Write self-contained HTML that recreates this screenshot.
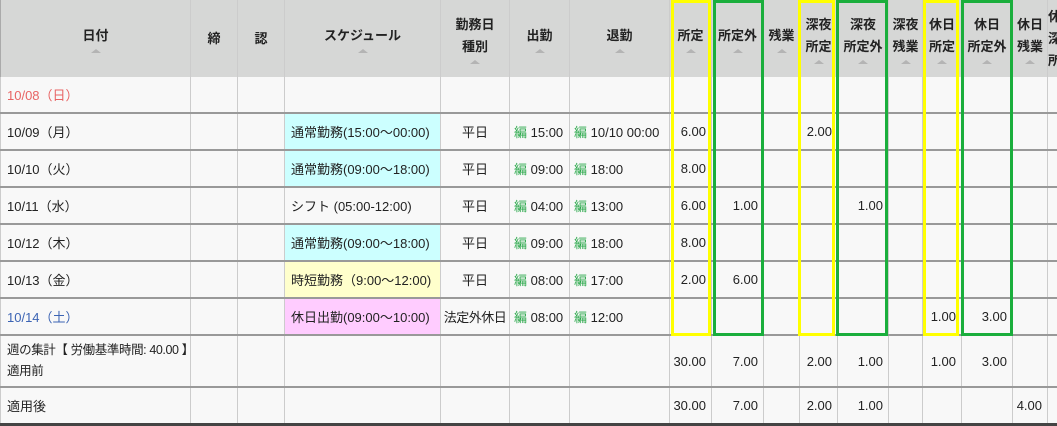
<!DOCTYPE html>
<html><head><meta charset="utf-8"><style>
body{margin:0;width:1057px;height:426px;overflow:hidden;background:#f8f8f8;font-family:"Liberation Sans","Noto Sans CJK JP",sans-serif;font-size:13px;color:#222;position:relative}
table{border-collapse:collapse;table-layout:fixed;position:absolute;left:0;top:0;width:1080px}
td,th{border-left:1px solid #ccc;border-right:1px solid #ccc;padding:0;white-space:nowrap;overflow:hidden}
th{background:#d6d7d6;font-weight:bold;height:77px;border-left:1px solid #aaa;line-height:22px;vertical-align:middle;position:relative}
th .a{display:block;width:0;height:0;margin:0 auto;border-left:5px solid transparent;border-right:5px solid transparent;border-bottom:4px solid #b4b4b4;margin-top:2px}
td{border-top:2px solid #999;height:35px}
.l{padding-left:6px}
.r{text-align:right;padding-right:5px}
.c{text-align:center}
.g{color:#2aa84a}
.cy{background:#ccffff}.yl{background:#ffffcc}.pk{background:#ffccff}
.red{color:#e86464}.blue{color:#3c64b4}
.box{position:absolute;top:0;height:336px;box-sizing:border-box}
.Y{border:3px solid #ffff00}.G{border:3px solid #1aae3c}
.bb{border-bottom:3px solid #444}
</style></head><body>
<table>
<colgroup><col style="width:190px"><col style="width:47px"><col style="width:47px"><col style="width:156px"><col style="width:69px"><col style="width:60px"><col style="width:100px"><col style="width:42px"><col style="width:52px"><col style="width:36px"><col style="width:38px"><col style="width:51px"><col style="width:34px"><col style="width:39px"><col style="width:51px"><col style="width:35px"><col style="width:33px"></colgroup>
<tr><th>日付<span class="a"></span></th><th>締</th><th>認</th><th>スケジュール<span class="a"></span></th><th>勤務日<br>種別<span class="a"></span></th><th>出勤<span class="a"></span></th><th>退勤<span class="a"></span></th><th>所定<span class="a"></span></th><th>所定外<span class="a"></span></th><th>残業<span class="a"></span></th><th>深夜<br>所定<span class="a"></span></th><th>深夜<br>所定外<span class="a"></span></th><th>深夜<br>残業<span class="a"></span></th><th>休日<br>所定<span class="a"></span></th><th>休日<br>所定外<span class="a"></span></th><th>休日<br>残業<span class="a"></span></th><th style="text-align:left">休<br>深<br>所</th></tr>
<tr><td class="l red" style="border-top:none;height:35px">10/08（日）</td><td style="border-top:none"></td><td style="border-top:none"></td><td style="border-top:none"></td><td style="border-top:none"></td><td style="border-top:none"></td><td style="border-top:none"></td><td style="border-top:none"></td><td style="border-top:none"></td><td style="border-top:none"></td><td style="border-top:none"></td><td style="border-top:none"></td><td style="border-top:none"></td><td style="border-top:none"></td><td style="border-top:none"></td><td style="border-top:none"></td><td style="border-top:none"></td></tr>
<tr><td class="l">10/09（月）</td><td></td><td></td><td class="l cy">通常勤務(15:00～00:00)</td><td class="c">平日</td><td class="l" style="padding-left:4px"><span class="g">編</span> 15:00</td><td class="l" style="padding-left:4px"><span class="g">編</span> 10/10 00:00</td><td class="r">6.00</td><td></td><td></td><td class="r">2.00</td><td></td><td></td><td></td><td></td><td></td><td></td></tr>
<tr><td class="l">10/10（火）</td><td></td><td></td><td class="l cy">通常勤務(09:00～18:00)</td><td class="c">平日</td><td class="l" style="padding-left:4px"><span class="g">編</span> 09:00</td><td class="l" style="padding-left:4px"><span class="g">編</span> 18:00</td><td class="r">8.00</td><td></td><td></td><td></td><td></td><td></td><td></td><td></td><td></td><td></td></tr>
<tr><td class="l">10/11（水）</td><td></td><td></td><td class="l">シフト (05:00-12:00)</td><td class="c">平日</td><td class="l" style="padding-left:4px"><span class="g">編</span> 04:00</td><td class="l" style="padding-left:4px"><span class="g">編</span> 13:00</td><td class="r">6.00</td><td class="r">1.00</td><td></td><td></td><td class="r">1.00</td><td></td><td></td><td></td><td></td><td></td></tr>
<tr><td class="l">10/12（木）</td><td></td><td></td><td class="l cy">通常勤務(09:00～18:00)</td><td class="c">平日</td><td class="l" style="padding-left:4px"><span class="g">編</span> 09:00</td><td class="l" style="padding-left:4px"><span class="g">編</span> 18:00</td><td class="r">8.00</td><td></td><td></td><td></td><td></td><td></td><td></td><td></td><td></td><td></td></tr>
<tr><td class="l">10/13（金）</td><td></td><td></td><td class="l yl">時短勤務（9:00～12:00)</td><td class="c">平日</td><td class="l" style="padding-left:4px"><span class="g">編</span> 08:00</td><td class="l" style="padding-left:4px"><span class="g">編</span> 17:00</td><td class="r">2.00</td><td class="r">6.00</td><td></td><td></td><td></td><td></td><td></td><td></td><td></td><td></td></tr>
<tr><td class="l blue">10/14（土）</td><td></td><td></td><td class="l pk">休日出勤(09:00～10:00)</td><td class="c" style="letter-spacing:-0.5px">法定外休日</td><td class="l" style="padding-left:4px"><span class="g">編</span> 08:00</td><td class="l" style="padding-left:4px"><span class="g">編</span> 12:00</td><td></td><td></td><td></td><td></td><td></td><td></td><td class="r">1.00</td><td class="r">3.00</td><td></td><td></td></tr>
<tr><td class="l" style="height:50px;line-height:21px;font-size:12.5px;letter-spacing:-0.4px">週の集計【 労働基準時間: 40.00 】<br>適用前</td><td></td><td></td><td></td><td></td><td></td><td></td><td class="r">30.00</td><td class="r">7.00</td><td></td><td class="r">2.00</td><td class="r">1.00</td><td></td><td class="r">1.00</td><td class="r">3.00</td><td></td><td></td></tr>
<tr><td class="l bb" style="height:31px">適用後</td><td class="bb"></td><td class="bb"></td><td class="bb"></td><td class="bb"></td><td class="bb"></td><td class="bb"></td><td class="r bb">30.00</td><td class="r bb">7.00</td><td class="bb"></td><td class="r bb">2.00</td><td class="r bb">1.00</td><td class="bb"></td><td class="bb"></td><td class="bb"></td><td class="r bb">4.00</td><td class="bb"></td></tr>
</table>
<div class="box Y" style="left:671px;width:40px"></div>
<div class="box G" style="left:713px;width:51px"></div>
<div class="box Y" style="left:798px;width:37px"></div>
<div class="box G" style="left:836px;width:52px"></div>
<div class="box Y" style="left:923px;width:36px"></div>
<div class="box G" style="left:961px;width:52px"></div>
</body></html>
